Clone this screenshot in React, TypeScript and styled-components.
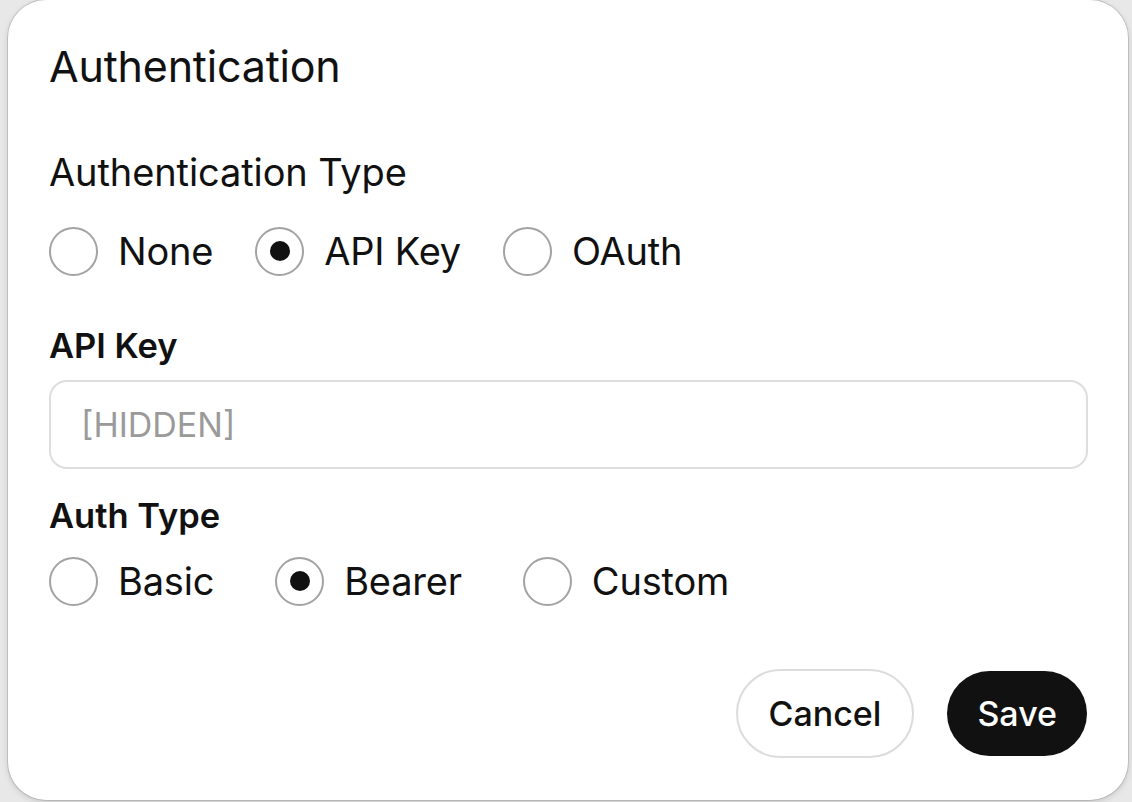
import React, {useState} from "react";
import styled, {createGlobalStyle} from "styled-components";

const GlobalStyles = createGlobalStyle`
  html, body {
    margin: 0;
    padding: 0;
    background: #e8e8e8;
    font-family: Inter, "Noto Sans", sans-serif;
    color: #111;
  }
`;

const Page = styled.div`
  width: 1132px;
  height: 802px;
  box-sizing: border-box;
  padding: 0 4px 2px 8px;
  overflow: hidden;
`;

const Dialog = styled.div`
  box-sizing: border-box;
  height: 800px;
  background: #fff;
  border-radius: 38px;
  box-shadow: 0 0 0 1px rgba(0, 0, 0, 0.12), 0 2px 6px rgba(0, 0, 0, 0.15);
  padding: 38px 40px 0 41px;
  display: flex;
  flex-direction: column;
`;

const Title = styled.h1`
  margin: 0;
  font-size: 43px;
  font-weight: 400;
  line-height: 56px;
  letter-spacing: -0.2px;
`;

const SectionTitle = styled.div`
  margin-top: 58px;
  font-size: 38px;
  line-height: 40px;
  letter-spacing: -0.1px;
`;

const FieldLabel = styled.div<{ $top: number }>`
  margin-top: ${p => p.$top}px;
  font-size: 34.5px;
  font-weight: 600;
  line-height: 36px;
`;

const RadioRow = styled.div<{ $top: number; $gap: number }>`
  display: flex;
  align-items: center;
  gap: ${p => p.$gap}px;
  margin-top: ${p => p.$top}px;
  height: 50px;
`;

const RadioItem = styled.label`
  display: flex;
  align-items: center;
  gap: 20px;
  font-size: 38px;
  letter-spacing: -0.2px;
  cursor: pointer;
`;

const Circle = styled.span<{ $on: boolean }>`
  box-sizing: border-box;
  width: 49px;
  height: 49px;
  border-radius: 50%;
  border: 2px solid #a3a3a3;
  display: flex;
  align-items: center;
  justify-content: center;

  &::after {
    content: "";
    width: 20px;
    height: 20px;
    border-radius: 50%;
    background: #111;
    display: ${p => (p.$on ? "block" : "none")};
  }
`;

const Input = styled.input`
  box-sizing: border-box;
  margin-top: 16px;
  width: 100%;
  height: 89px;
  border: 2px solid #dedede;
  border-radius: 18px;
  padding: 0 30px;
  font-family: inherit;
  font-size: 34px;
  color: #111;
  outline: none;

  &::placeholder {
    color: #9a9a9a;
  }
`;

const Footer = styled.div`
  display: flex;
  justify-content: flex-end;
  gap: 33px;
  margin-top: 63px;
  margin-right: 1px;
  align-items: center;
`;

const Button = styled.button<{ $primary?: boolean }>`
  box-sizing: border-box;
  height: ${p => (p.$primary ? 85 : 89)}px;
  padding: 0 ${p => (p.$primary ? 30 : 31)}px;
  border-radius: 45px;
  font-family: inherit;
  font-size: 34px;
  font-weight: 500;
  cursor: pointer;
  background: ${p => (p.$primary ? "#111" : "#fff")};
  color: ${p => (p.$primary ? "#fff" : "#111")};
  border: ${p => (p.$primary ? "none" : "2px solid #dcdcdc")};
`;

function Radios({options, value, onChange}: { options: string[]; value: string; onChange: (v: string) => void }) {
    return (
        <>
            {options.map(o => (
                <RadioItem key={o} onClick={() => onChange(o)}>
                    <Circle $on={o === value}/>
                    {o}
                </RadioItem>
            ))}
        </>
    );
}

export default function App() {
    const [type, setType] = useState("API Key");
    const [auth, setAuth] = useState("Bearer");
    return (
        <Page>
            <GlobalStyles/>
            <Dialog>
                <Title>Authentication</Title>
                <SectionTitle>Authentication Type</SectionTitle>
                <RadioRow $top={34} $gap={42}>
                    <Radios options={["None", "API Key", "OAuth"]} value={type} onChange={setType}/>
                </RadioRow>
                <FieldLabel $top={52}>API Key</FieldLabel>
                <Input placeholder="[HIDDEN]"/>
                <FieldLabel $top={29}>Auth Type</FieldLabel>
                <RadioRow $top={22} $gap={61}>
                    <Radios options={["Basic", "Bearer", "Custom"]} value={auth} onChange={setAuth}/>
                </RadioRow>
                <Footer>
                    <Button>Cancel</Button>
                    <Button $primary>Save</Button>
                </Footer>
            </Dialog>
        </Page>
    );
}
